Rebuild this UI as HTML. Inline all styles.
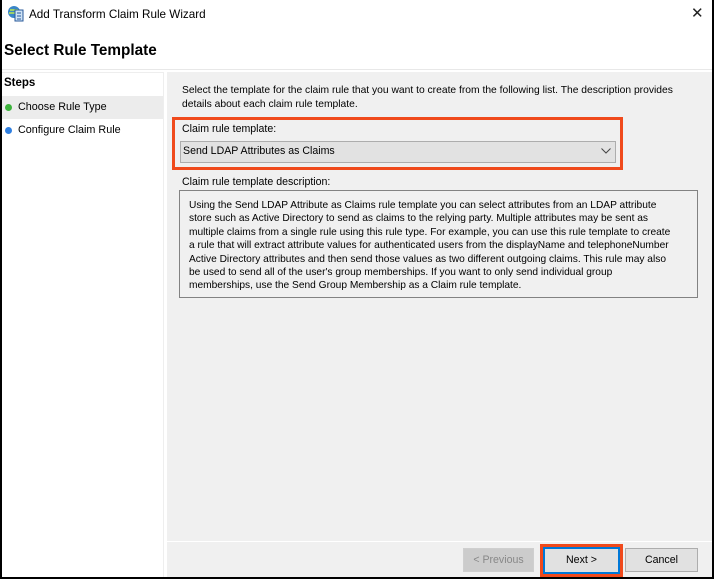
<!DOCTYPE html>
<html><head><style>
*{margin:0;padding:0;box-sizing:border-box}
body{width:714px;height:579px;position:relative;overflow:hidden;background:#fff;font-family:"Liberation Sans",sans-serif;font-size:10.6px;color:#000}
.a{position:absolute;white-space:nowrap}
</style></head><body>
<div class="a" style="left:0;top:0;width:714px;height:579px;border:2px solid #000;border-top:none"></div>
<svg class="a" style="left:7px;top:5px" width="17" height="17" viewBox="0 0 17 17"><circle cx="7" cy="7" r="6" fill="#3a86c8"/><path d="M3 5h8M2 8h10" stroke="#9cd06a" stroke-width="2"/><rect x="8" y="5" width="8" height="11" fill="#cfe3f5" stroke="#2a5a9a"/><path d="M10 8h4M10 11h4M10 14h4" stroke="#2a5a9a"/></svg>
<div class="a" style="left:29px;top:8px;font-size:11.7px">Add Transform Claim Rule Wizard</div>
<div class="a" style="left:691px;top:4px;font-size:15px;color:#222">✕</div>
<div class="a" style="left:4px;top:42px;font-size:15.3px;font-weight:bold">Select Rule Template</div>
<div class="a" style="left:2px;top:69px;width:710px;height:1px;background:#e8e8e8"></div>
<div class="a" style="left:2px;top:72px;width:162px;height:505px;background:#fff;border-right:1px solid #eee;border-top:1px solid #eee"></div>
<div class="a" style="left:4px;top:77px;font-weight:bold;font-size:11.5px">Steps</div>
<div class="a" style="left:2px;top:96px;width:161px;height:23px;background:#ececec"></div>
<div class="a" style="left:5px;top:104px;width:7px;height:7px;border-radius:50%;background:#3cb33c"></div>
<div class="a" style="left:18px;top:101px;font-size:10.8px">Choose Rule Type</div>
<div class="a" style="left:5px;top:127px;width:7px;height:7px;border-radius:50%;background:#2f7fe0"></div>
<div class="a" style="left:18px;top:124px;font-size:10.8px">Configure Claim Rule</div>
<div class="a" style="left:167px;top:72px;width:545px;height:505px;background:#f0f0f0"></div>
<div class="a" style="left:167px;top:541px;width:545px;height:1px;background:#fff"></div>
<div class="a" style="left:182px;top:84px;line-height:14px;font-size:10.3px">Select the template for the claim rule that you want to create from the following list. The description provides<br>details about each claim rule template.</div>
<div class="a" style="left:172px;top:117px;width:451px;height:53px;border:3px solid #f04a1c"></div>
<div class="a" style="left:182px;top:123px">Claim rule template:</div>
<div class="a" style="left:180px;top:141px;width:436px;height:22px;background:#e2e2e2;border:1px solid #adadad"></div>
<div class="a" style="left:183px;top:145px;font-size:10.6px">Send LDAP Attributes as Claims</div>
<svg class="a" style="left:601px;top:148px" width="10" height="6"><path d="M0.5 0.5L5 5L9.5 0.5" fill="none" stroke="#444"/></svg>
<div class="a" style="left:182px;top:176px">Claim rule template description:</div>
<div class="a" style="left:179px;top:190px;width:519px;height:108px;border:1px solid #828282"></div>
<div class="a" style="left:189px;top:199px;font-size:10.2px;line-height:13.4px">Using the Send LDAP Attribute as Claims rule template you can select attributes from an LDAP attribute<br>store such as Active Directory to send as claims to the relying party. Multiple attributes may be sent as<br>multiple claims from a single rule using this rule type. For example, you can use this rule template to create<br>a rule that will extract attribute values for authenticated users from the displayName and telephoneNumber<br>Active Directory attributes and then send those values as two different outgoing claims. This rule may also<br>be used to send all of the user's group memberships. If you want to only send individual group<br>memberships, use the Send Group Membership as a Claim rule template.</div>
<div class="a" style="left:463px;top:548px;width:71px;height:24px;border:1px solid #cfcfcf;background:#ccc;color:#888;text-align:center;line-height:22px">&lt; Previous</div>
<div class="a" style="left:540px;top:544px;width:83px;height:33px;border:3px solid #f04a1c"></div>
<div class="a" style="left:543px;top:547px;width:77px;height:27px;border:2px solid #0078d7;background:#e1e1e1;text-align:center;line-height:23px">Next &gt;</div>
<div class="a" style="left:625px;top:548px;width:73px;height:24px;border:1px solid #adadad;background:#e1e1e1;text-align:center;line-height:22px">Cancel</div>
</body></html>
